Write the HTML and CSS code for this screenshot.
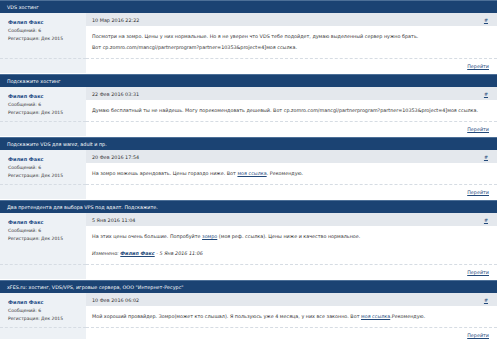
FILE: index.html
```html
<!DOCTYPE html>
<html lang="ru">
<head>
    <meta charset="UTF-8">
    <title>Филип Факс - сообщения</title>
    <link rel="stylesheet" href="styles.css">
</head>
<body>
    <div class="posts">

        <div class="post">
            <div class="post-title">VDS хостинг</div>
            <div class="post-grid">
                <div class="user">
                    <a class="user-name" href="#">Филип Факс</a>
                    <div>Сообщений: 6</div>
                    <div>Регистрация: Дек 2015</div>
                </div>
                <div class="post-date"><span>10 Мар 2016 22:22</span><a href="#">#</a></div>
                <div class="post-body">
                    Посмотри на зомро. Цены у них нормальные. Но я не уверен что VDS тебе подойдет, думаю выделенный сервер нужно брать.<br>
                    Вот cp.zomro.com/mancgi/partnerprogram?partner=10353&amp;project=4]моя ссылка.
                </div>
                <div class="foot-left"></div>
                <div class="foot-right"><a href="#">Перейти</a></div>
            </div>
        </div>

        <div class="post">
            <div class="post-title">Подскажите хостинг</div>
            <div class="post-grid">
                <div class="user">
                    <a class="user-name" href="#">Филип Факс</a>
                    <div>Сообщений: 6</div>
                    <div>Регистрация: Дек 2015</div>
                </div>
                <div class="post-date"><span>22 Фев 2016 03:31</span><a href="#">#</a></div>
                <div class="post-body">
                    Думаю бесплатный ты не найдешь. Могу порекомендовать дешевый. Вот cp.zomro.com/mancgi/partnerprogram?partner=10353&amp;project=4]моя ссылка.
                </div>
                <div class="foot-left"></div>
                <div class="foot-right"><a href="#">Перейти</a></div>
            </div>
        </div>

        <div class="post">
            <div class="post-title">Подскажите VDS для warez, adult и пр.</div>
            <div class="post-grid">
                <div class="user">
                    <a class="user-name" href="#">Филип Факс</a>
                    <div>Сообщений: 6</div>
                    <div>Регистрация: Дек 2015</div>
                </div>
                <div class="post-date"><span>20 Фев 2016 17:54</span><a href="#">#</a></div>
                <div class="post-body">
                    На зомро можешь арендовать. Цены гораздо ниже. Вот <a href="#">моя ссылка</a>. Рекомендую.
                </div>
                <div class="foot-left"></div>
                <div class="foot-right"><a href="#">Перейти</a></div>
            </div>
        </div>

        <div class="post">
            <div class="post-title">Два претендента для выбора VPS под адалт. Подскажите.</div>
            <div class="post-grid">
                <div class="user">
                    <a class="user-name" href="#">Филип Факс</a>
                    <div>Сообщений: 6</div>
                    <div>Регистрация: Дек 2015</div>
                </div>
                <div class="post-date"><span>5 Янв 2016 11:04</span><a href="#">#</a></div>
                <div class="post-body">
                    На этих цены очень большие. Попробуйте <a href="#">зомро</a> (моя реф. ссылка). Цены ниже и качество нормальное.
                    <div class="edited">Изменено: <a href="#">Филип Факс</a> - 5 Янв 2016 11:06</div>
                </div>
                <div class="foot-left"></div>
                <div class="foot-right"><a href="#">Перейти</a></div>
            </div>
        </div>

        <div class="post">
            <div class="post-title">xFES.ru: хостинг, VDS/VPS, игровые сервера, ООО "Интернет-Ресурс"</div>
            <div class="post-grid">
                <div class="user">
                    <a class="user-name" href="#">Филип Факс</a>
                    <div>Сообщений: 6</div>
                    <div>Регистрация: Дек 2015</div>
                </div>
                <div class="post-date"><span>10 Фев 2016 06:02</span><a href="#">#</a></div>
                <div class="post-body">
                    Мой хороший провайдер. Зомро(может кто слышал). Я пользуюсь уже 4 месяца, у них все законно. Вот <a href="#">моя ссылка</a>.Рекомендую.
                </div>
                <div class="foot-left"></div>
                <div class="foot-right"><a href="#">Перейти</a></div>
            </div>
        </div>

    </div>
</body>
</html>
```

FILE: styles.css
```css
/* Общие стили */
body {
    margin: 0;
    background: #fff;
    font-family: "DejaVu Sans", Verdana, sans-serif;
    font-size: 4.85px;
    color: #333;
}

a {
    color: #22497a;
}

.posts {
    margin-right: 3px;
}

.post {
    margin-bottom: 1px;
}

/* Заголовок темы */
.post-title {
    height: 12px;
    line-height: 12px;
    padding-left: 7px;
    background: #1b4373;
    border-top: 1px solid #4d7098;
    color: #fff;
    white-space: nowrap;
    overflow: hidden;
}

/* Сетка сообщения */
.post-grid {
    display: grid;
    grid-template-columns: 86px 1fr;
}

.user {
    grid-row: 1 / 3;
    background: #edf1f5;
    padding: 5px 0 0 8px;
    line-height: 8px;
    font-size: 4.5px;
}

.user-name {
    display: block;
    font-weight: bold;
    text-decoration: none;
    color: #1f4d86;
    font-size: 5px;
    margin-bottom: 1px;
}

.post-date {
    display: flex;
    justify-content: space-between;
    height: 13px;
    line-height: 14px;
    padding: 0 9px 0 6px;
    background: #e4e8ed;
}

.post-body {
    padding: 5px 6px 5px 6px;
    line-height: 11px;
}

.edited {
    margin-top: 6px;
    font-style: italic;
}

.edited a {
    font-weight: bold;
}

.foot-left,
.foot-right {
    height: 14px;
    border-top: 1px dashed #d6dce3;
}

.foot-left {
    background: #edf1f5;
}

.foot-right {
    text-align: right;
    line-height: 14px;
    padding-right: 8px;
}
```
